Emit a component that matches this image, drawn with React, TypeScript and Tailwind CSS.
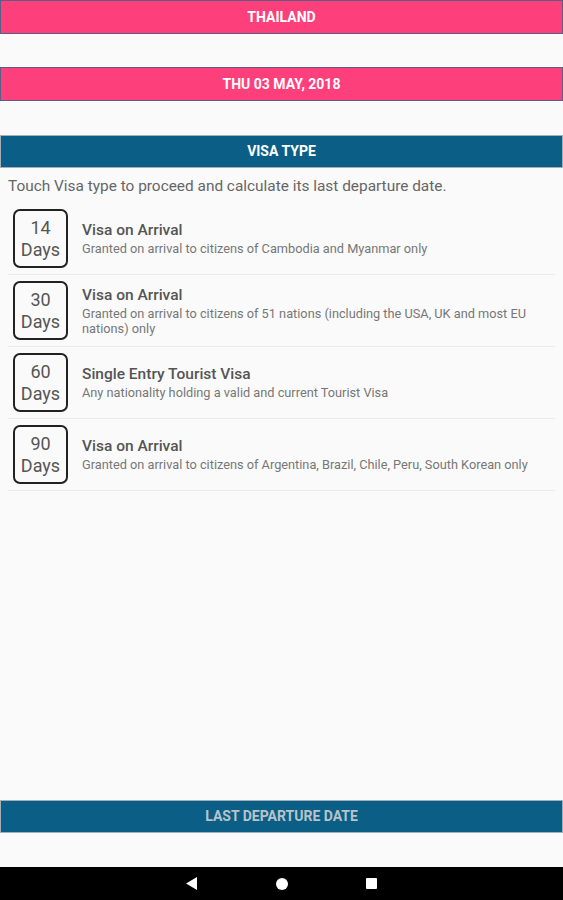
const visas = [
  { days: '14', title: 'Visa on Arrival', desc: 'Granted on arrival to citizens of Cambodia and Myanmar only' },
  { days: '30', title: 'Visa on Arrival', desc: 'Granted on arrival to citizens of 51 nations (including the USA, UK and most EU nations) only' },
  { days: '60', title: 'Single Entry Tourist Visa', desc: 'Any nationality holding a valid and current Tourist Visa' },
  { days: '90', title: 'Visa on Arrival', desc: 'Granted on arrival to citizens of Argentina, Brazil, Chile, Peru, South Korean only' },
];

const PinkBar = ({ label }: { label: string }) => (
  <div className="h-[34px] bg-[#fd407b] border border-[#5b5e86] flex items-center justify-center">
    <span className="text-[14px] font-bold text-white">{label}</span>
  </div>
);

const BlueBar = ({ label, muted }: { label: string; muted?: boolean }) => (
  <div className="h-[33px] bg-[#0b5f86] border border-[#a3b0b8] flex items-center justify-center">
    <span className={`text-[14px] font-bold ${muted ? 'text-[#b9c3c9]' : 'text-white'}`}>{label}</span>
  </div>
);

export default function App() {
  return (
    <div className="w-[563px] h-[900px] bg-[#fafafa] flex flex-col font-['Roboto',sans-serif]">
      <PinkBar label="THAILAND" />
      <div className="h-[33px]" />
      <PinkBar label="THU 03 MAY, 2018" />
      <div className="h-[34px]" />
      <BlueBar label="VISA TYPE" />

      <p className="px-[8px] pt-[8px] text-[15.4px] leading-[20px] text-[#666]">
        Touch Visa type to proceed and calculate its last departure date.
      </p>

      <div className="px-[8px] mt-[7px]">
        {visas.map((v, i) => (
          <div key={i} className="h-[72px] flex items-center border-b border-[#ebebeb]">
            <div className="ml-[5px] w-[55px] h-[59px] border-2 border-[#222] rounded-[7px] flex flex-col items-center justify-center leading-[22px] text-[18px] text-[#555]">
              <span>{v.days}</span>
              <span>Days</span>
            </div>
            <div className="ml-[14px] flex-1 pr-[20px]">
              <div className="text-[15.5px] font-medium text-[#555] leading-[19px]">{v.title}</div>
              <div className="text-[12.75px] text-[#777] leading-[15px] mt-[1px]">{v.desc}</div>
            </div>
          </div>
        ))}
      </div>

      <div className="flex-1" />
      <BlueBar label="LAST DEPARTURE DATE" muted />
      <div className="h-[34px]" />

      <div className="h-[33px] bg-black flex items-center justify-center gap-[78px]">
        <svg width="12" height="13" viewBox="0 0 12 13">
          <polygon points="11,0 11,13 0,6.5" fill="white" />
        </svg>
        <div className="w-[12px] h-[12px] rounded-full bg-white" />
        <div className="w-[11px] h-[11px] rounded-[1px] bg-white" />
      </div>
    </div>
  );
}
